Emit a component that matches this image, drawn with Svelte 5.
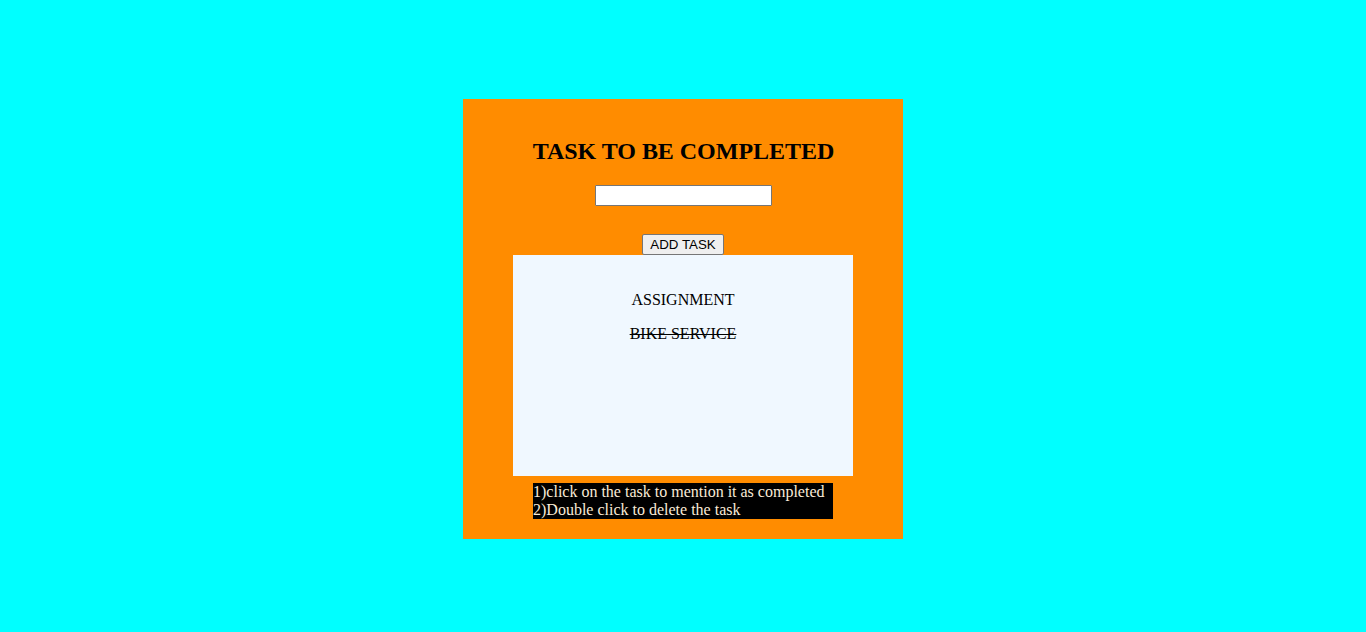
<script>
  let draft = $state('');
  let tasks = $state([
    { name: 'ASSIGNMENT', done: false },
    { name: 'BIKE SERVICE', done: true }
  ]);
  function add() {
    if (!draft.trim()) return;
    tasks.push({ name: draft, done: false });
    draft = '';
  }
</script>

<main>
  <section class="card">
    <h2>TASK TO BE COMPLETED</h2>
    <input type="text" bind:value={draft} />
    <button onclick={add}>ADD TASK</button>
    <div class="list">
      {#each tasks as task, i}
        <!-- svelte-ignore a11y_click_events_have_key_events, a11y_no_static_element_interactions -->
        <p class:done={task.done} onclick={() => (task.done = true)} ondblclick={() => tasks.splice(i, 1)}>{task.name}</p>
      {/each}
    </div>
    <div class="help">1)click on the task to mention it as completed<br />2)Double click to delete the task</div>
  </section>
</main>

<style>
  :global(body) {
    background: #00ffff;
    font-family: "Liberation Serif", "Times New Roman", serif;
  }
  main {
    box-sizing: border-box;
    height: 632px;
    padding-top: 99px;
    display: flex;
    justify-content: center;
    align-items: flex-start;
  }
  .card {
    box-sizing: border-box;
    width: 440px;
    height: 440px;
    padding-top: 38px;
    background: #ff8c00;
    display: flex;
    flex-direction: column;
    align-items: center;
  }
  h2 {
    margin: 0;
    padding-left: 1px;
    font-size: 24px;
    line-height: 28px;
    letter-spacing: -0.03px;
    white-space: nowrap;
  }
  input {
    box-sizing: border-box;
    width: 177px;
    height: 21px;
    margin: 20px 0 0;
    padding: 1px 2px;
    border: 1px solid #767676;
    border-radius: 1px;
    background: #fff;
  }
  button {
    box-sizing: border-box;
    width: 82px;
    height: 21px;
    margin: 28px 0 0;
    padding: 0;
    border: 1px solid #767676;
    border-radius: 2px;
    background: #efefef;
    color: #000;
    font: 13.333px "Liberation Sans", Arial, sans-serif;
    white-space: nowrap;
  }
  .list {
    box-sizing: border-box;
    width: 340px;
    height: 221px;
    padding-top: 36px;
    background: #f0f8ff;
    text-align: center;
  }
  p {
    margin: 0 0 16px;
    font-size: 16px;
    line-height: 18px;
  }
  .done {
    text-decoration: line-through;
  }
  .help {
    width: 300px;
    margin-top: 7px;
    background: #000;
    color: #faebd7;
    font-size: 16px;
    line-height: 18px;
    white-space: nowrap;
  }
</style>
